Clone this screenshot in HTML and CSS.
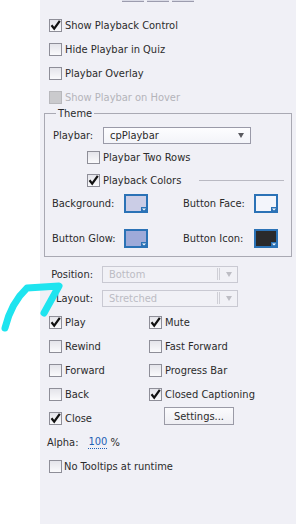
FILE: index.html
```html
<!DOCTYPE html>
<html lang="en">
<head>
  <meta charset="UTF-8">
  <title>Playback properties</title>
  <link rel="stylesheet" href="styles.css">
</head>
<body>
<div class="page">
  <div class="gutter"></div>
  <div class="panel">
    <div class="tabs"><span></span><span></span><span></span></div>

    <div class="row"><span class="box"><svg viewBox="0 0 11 11"><path d="M1.5 5.2 L4.2 8.6 L9.8 0.8"/></svg></span>Show Playback Control</div>
    <div class="row"><span class="box"></span>Hide Playbar in Quiz</div>
    <div class="row"><span class="box"></span>Playbar Overlay</div>
    <div class="row off"><span class="box"></span>Show Playbar on Hover</div>

    <fieldset class="theme">
      <legend>Theme</legend>
      <div class="field">
        <span class="field-label">Playbar:</span>
        <div class="select"><span>cpPlaybar</span><i class="caret"></i></div>
      </div>
      <div class="row sub"><span class="box"></span>Playbar Two Rows</div>
      <div class="row sub"><span class="box"><svg viewBox="0 0 11 11"><path d="M1.5 5.2 L4.2 8.6 L9.8 0.8"/></svg></span>Playback Colors<span class="rule"></span></div>
      <div class="swatches">
        <span>Background:</span>
        <svg class="swatch" viewBox="0 0 24 19"><rect x="1" y="1" width="22" height="17" fill="#cbcde6"/><rect x="17" y="13" width="6" height="5" class="notch"/><path d="M18 14.5 H22 L20 16.5 Z" fill="#fff"/></svg>
        <span class="right">Button Face:</span>
        <svg class="swatch" viewBox="0 0 24 19"><rect x="1" y="1" width="22" height="17" fill="#f3f5fb"/><rect x="17" y="13" width="6" height="5" class="notch"/><path d="M18 14.5 H22 L20 16.5 Z" fill="#fff"/></svg>
        <span>Button Glow:</span>
        <svg class="swatch" viewBox="0 0 24 19"><rect x="1" y="1" width="22" height="17" fill="#9eaad9"/><rect x="17" y="13" width="6" height="5" class="notch"/><path d="M18 14.5 H22 L20 16.5 Z" fill="#fff"/></svg>
        <span class="right">Button Icon:</span>
        <svg class="swatch" viewBox="0 0 24 19"><rect x="1" y="1" width="22" height="17" fill="#2a2a2c"/><rect x="17" y="13" width="6" height="5" class="notch"/><path d="M18 14.5 H22 L20 16.5 Z" fill="#fff"/></svg>
      </div>
    </fieldset>

    <div class="options">
      <span class="opt-label">Position:</span>
      <div class="select off"><span>Bottom</span><i class="sep"></i><i class="caret"></i></div>
      <span class="opt-label">Layout:</span>
      <div class="select off"><span>Stretched</span><i class="sep"></i><i class="caret"></i></div>
    </div>

    <div class="controls">
      <div class="row"><span class="box"><svg viewBox="0 0 11 11"><path d="M1.5 5.2 L4.2 8.6 L9.8 0.8"/></svg></span>Play</div>
      <div class="row"><span class="box"><svg viewBox="0 0 11 11"><path d="M1.5 5.2 L4.2 8.6 L9.8 0.8"/></svg></span>Mute</div>
      <div class="row"><span class="box"></span>Rewind</div>
      <div class="row"><span class="box"></span>Fast Forward</div>
      <div class="row"><span class="box"></span>Forward</div>
      <div class="row"><span class="box"></span>Progress Bar</div>
      <div class="row"><span class="box"></span>Back</div>
      <div class="row"><span class="box"><svg viewBox="0 0 11 11"><path d="M1.5 5.2 L4.2 8.6 L9.8 0.8"/></svg></span>Closed Captioning</div>
      <div class="row"><span class="box"><svg viewBox="0 0 11 11"><path d="M1.5 5.2 L4.2 8.6 L9.8 0.8"/></svg></span>Close</div>
      <div class="row"><button class="btn">Settings...</button></div>
    </div>

    <div class="alpha">Alpha:<span class="num">100</span>%</div>
    <div class="row tight"><span class="box"></span>No Tooltips at runtime</div>
  </div>
</div>

<svg class="scribble" width="80" height="80" viewBox="0 0 80 80">
  <path d="M44 53 L59 26 L27 28 Q11 43 5 68"/>
</svg>
</body>
</html>
```

FILE: styles.css
```css
body {
  margin: 0;
  font: 11px "DejaVu Sans Condensed", "DejaVu Sans", sans-serif;
  color: #2b2b2b;
}

.page {
  display: flex;
  height: 524px;
}

.gutter {
  width: 40px;
  background: #fff;
}

.panel {
  flex: 1;
  background: #f0f0f6;
}

.tabs {
  display: flex;
  gap: 3px;
  height: 2px;
  margin: 0 0 11px 82px;
}

.tabs span {
  width: 22px;
  height: 1px;
  background: #dadbe6;
  border-bottom: 1px solid #9c9cae;
}

.row {
  display: flex;
  align-items: center;
  gap: 3px;
  height: 24px;
  padding-left: 9px;
  white-space: nowrap;
}

.row.tight {
  gap: 2px;
}

.box {
  flex: none;
  width: 11px;
  height: 11px;
  border: 1px solid #8e8e98;
  background: linear-gradient(#e4e4ea, #fafafc);
  display: grid;
  place-items: center;
}

.box svg {
  width: 11px;
  height: 11px;
  overflow: visible;
}

.box path {
  fill: none;
  stroke: #111;
  stroke-width: 2.2;
}

.row.off {
  color: #b4b4ba;
}

.row.off .box {
  background: #cacacd;
  border-color: #b8b8bc;
}

/* theme group */
.theme {
  margin: -1px 4px 0;
  padding: 0 0 6px 7px;
  border: 1px solid #a9a9b3;
}

.theme legend {
  padding: 0 2px;
  margin-left: 4px;
  line-height: 11px;
}

.field {
  display: flex;
  align-items: center;
  height: 22px;
  margin-top: 5px;
}

.field-label {
  width: 50px;
  padding-left: 1px;
}

.select {
  box-sizing: border-box;
  display: flex;
  align-items: center;
  width: 148px;
  height: 17px;
  padding: 0 6px 0 6px;
  border: 1px solid #9a9aa8;
  background: linear-gradient(#fdfdff, #f3f4f9);
}

.select span {
  flex: 1;
}

.caret {
  width: 0;
  height: 0;
  border-left: 3.5px solid transparent;
  border-right: 3.5px solid transparent;
  border-top: 5px solid #5a5a60;
}

.select.off {
  width: 136px;
  border-color: #c9c9d2;
  background: #f1f1f6;
  color: #bcbcc4;
  padding-right: 5px;
}

.select.off .caret {
  border-top-color: #bdbdc4;
}

.sep {
  width: 1px;
  height: 12px;
  margin-right: 6px;
  border-left: 1px solid #cfcfd6;
  border-right: 1px solid #cfcfd6;
}

.row.sub {
  padding-left: 35px;
  height: 22px;
}

.row.sub + .row.sub {
  height: 24px;
}

.rule {
  flex: 1;
  height: 1px;
  margin: 0 7px 0 15px;
  background: #b9b9c2;
}

.swatches {
  display: grid;
  grid-template-columns: 72px 24px 106px 24px;
  grid-auto-rows: 23px;
  row-gap: 12px;
  align-items: center;
}

.swatches .right {
  padding-left: 35px;
}

.swatch {
  width: 24px;
  height: 19px;
}

.swatch rect:first-child {
  stroke: #2b72b6;
  stroke-width: 2;
}

.notch {
  fill: #2b72b6;
}

/* position / layout */
.options {
  display: grid;
  grid-template-columns: 53px 136px;
  grid-auto-rows: 24px;
  column-gap: 9px;
  align-items: center;
  margin-top: 5px;
}

.opt-label {
  text-align: right;
}

.controls {
  display: grid;
  grid-template-columns: 100px 1fr;
}

.btn {
  width: 70px;
  height: 18px;
  margin: 0 0 4px 0;
  padding: 0;
  font: inherit;
  color: #2b2b2b;
  border: 1px solid #9a9aa6;
  background: linear-gradient(#fbfbfd, #eeeef3);
}

.controls .row:last-child {
  padding-left: 24px;
}

.alpha {
  display: flex;
  align-items: center;
  height: 24px;
  padding-left: 7px;
}

.num {
  margin: 0 3px 0 10px;
  color: #1f5fb5;
  border-bottom: 1px dotted #1f5fb5;
  line-height: 12px;
}

.scribble {
  position: absolute;
  left: 0;
  top: 260px;
  overflow: visible;
}

.scribble path {
  fill: none;
  stroke: #1ee4ef;
  stroke-width: 7;
  stroke-linecap: round;
  stroke-linejoin: round;
}
```
